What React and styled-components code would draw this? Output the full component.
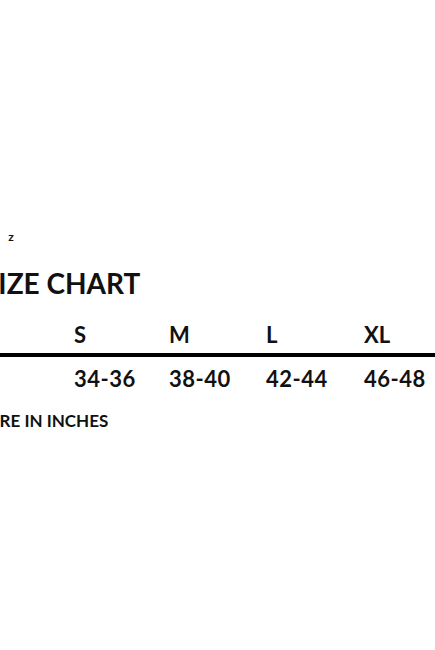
import React from "react";
import styled, { createGlobalStyle } from "styled-components";

const GlobalStyle = createGlobalStyle`
  html, body {
    margin: 0;
    padding: 0;
    background: #ffffff;
    overflow: hidden;
  }
  body {
    font-family: Lato, "Open Sans", sans-serif;
    color: #111111;
  }
`;

const sizes = [
  { label: "S", chest: "34-36" },
  { label: "M", chest: "38-40" },
  { label: "L", chest: "42-44" },
  { label: "XL", chest: "46-48" }
];

const App = () => {
  return (
    <Page>
      <GlobalStyle />
      <Sheet>
        <Crumb>Size z</Crumb>
        <Title>SIZE CHART</Title>
        <Table>
          <HeadCell />
          {sizes.map(size => (
            <HeadCell key={size.label}>{size.label}</HeadCell>
          ))}
          <Rule />
          <ValueCell />
          {sizes.map(size => (
            <ValueCell key={size.label}>{size.chest}</ValueCell>
          ))}
        </Table>
        <Note>MEASURE IN INCHES</Note>
      </Sheet>
    </Page>
  );
};

const Page = styled.div`
  width: 435px;
  height: 650px;
  overflow: hidden;
`;

const Sheet = styled.div`
  margin-left: -17px;
  padding-top: 230px;
  display: flex;
  flex-direction: column;
  font-weight: 700;
`;

const Crumb = styled.div`
  font-size: 12px;
  line-height: 14px;
  margin-left: -6px;
  margin-bottom: 22px;
  word-spacing: 7px;
`;

const Title = styled.h1`
  margin: 0;
  font-size: 28px;
  line-height: 34px;
  font-weight: 700;
`;

const Table = styled.div`
  margin-top: 21px;
  display: grid;
  grid-template-columns: 91px 95px 97px 98px 100px;
  width: 481px;
`;

const HeadCell = styled.div`
  font-size: 22px;
  line-height: 28px;
  padding-bottom: 4px;
`;

const Rule = styled.div`
  grid-column: 1 / -1;
  height: 4px;
  background: #000000;
`;

const ValueCell = styled.div`
  font-size: 22px;
  line-height: 28px;
  letter-spacing: 0.5px;
  padding-top: 8px;
`;

const Note = styled.div`
  margin-top: 18px;
  margin-left: -43px;
  font-size: 17px;
  line-height: 20px;
`;

export default App;
